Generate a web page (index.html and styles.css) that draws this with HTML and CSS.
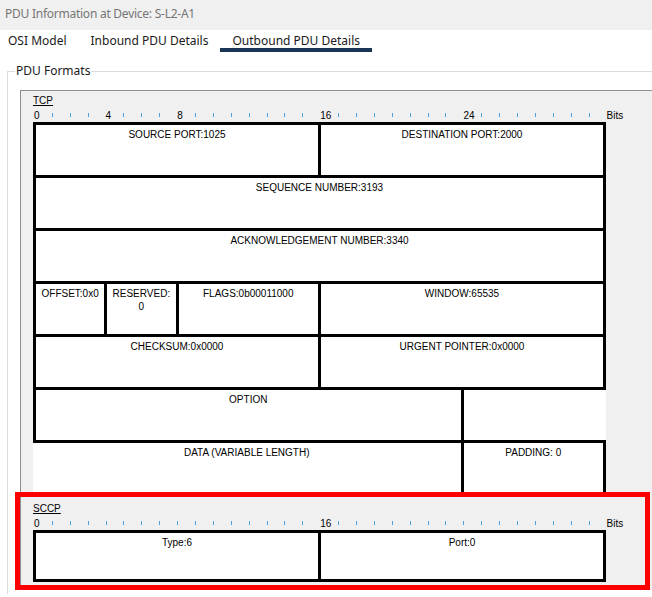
FILE: index.html
```html
<!DOCTYPE html>
<html>
<head>
<meta charset="utf-8">
<title>PDU Information</title>
<link rel="stylesheet" href="styles.css">
</head>
<body>
<div class="titlebar">PDU Information at Device: S-L2-A1</div>
<div class="tabs">
  <div class="tab first">OSI Model</div>
  <div class="tab">Inbound PDU Details</div>
  <div class="tab active">Outbound PDU Details</div>
</div>
<fieldset class="group">
  <legend>PDU Formats</legend>
  <div class="panel">
    <section class="pdu">
      <div class="pdu-name">TCP</div>
      <div class="ruler">
        <div class="bit"><span class="num">0</span></div>
        <div class="bit"><i class="tick"></i></div>
        <div class="bit"><i class="tick"></i></div>
        <div class="bit"><i class="tick"></i></div>
        <div class="bit"><span class="num">4</span></div>
        <div class="bit"><i class="tick"></i></div>
        <div class="bit"><i class="tick"></i></div>
        <div class="bit"><i class="tick"></i></div>
        <div class="bit"><span class="num">8</span></div>
        <div class="bit"><i class="tick"></i></div>
        <div class="bit"><i class="tick"></i></div>
        <div class="bit"><i class="tick"></i></div>
        <div class="bit"><i class="tick"></i></div>
        <div class="bit"><i class="tick"></i></div>
        <div class="bit"><i class="tick"></i></div>
        <div class="bit"><i class="tick"></i></div>
        <div class="bit"><span class="num">16</span></div>
        <div class="bit"><i class="tick"></i></div>
        <div class="bit"><i class="tick"></i></div>
        <div class="bit"><i class="tick"></i></div>
        <div class="bit"><i class="tick"></i></div>
        <div class="bit"><i class="tick"></i></div>
        <div class="bit"><i class="tick"></i></div>
        <div class="bit"><i class="tick"></i></div>
        <div class="bit"><span class="num">24</span></div>
        <div class="bit"><i class="tick"></i></div>
        <div class="bit"><i class="tick"></i></div>
        <div class="bit"><i class="tick"></i></div>
        <div class="bit"><i class="tick"></i></div>
        <div class="bit"><i class="tick"></i></div>
        <div class="bit"><i class="tick"></i></div>
        <div class="bit"><i class="tick"></i></div>
        <span class="bits">Bits</span>
      </div>
      <div class="fields tcp-fields">
        <div class="cell s4">SOURCE PORT:1025</div>
        <div class="cell s4">DESTINATION PORT:2000</div>
        <div class="cell s8">SEQUENCE NUMBER:3193</div>
        <div class="cell s8">ACKNOWLEDGEMENT NUMBER:3340</div>
        <div class="cell s1">OFFSET:0x0</div>
        <div class="cell s1">RESERVED:<br>0</div>
        <div class="cell s2">FLAGS:0b00011000</div>
        <div class="cell s4">WINDOW:65535</div>
        <div class="cell s4">CHECKSUM:0x0000</div>
        <div class="cell s4">URGENT POINTER:0x0000</div>
        <div class="cell s6">OPTION</div>
        <div class="cell s2 open-right"></div>
        <div class="cell s6 open-left">DATA (VARIABLE LENGTH)</div>
        <div class="cell s2">PADDING: 0</div>
      </div>
    </section>
    <section class="pdu sccp">
      <div class="pdu-name">SCCP</div>
      <div class="ruler">
        <div class="bit"><span class="num">0</span></div>
        <div class="bit"><i class="tick"></i></div>
        <div class="bit"><i class="tick"></i></div>
        <div class="bit"><i class="tick"></i></div>
        <div class="bit"><i class="tick"></i></div>
        <div class="bit"><i class="tick"></i></div>
        <div class="bit"><i class="tick"></i></div>
        <div class="bit"><i class="tick"></i></div>
        <div class="bit"><i class="tick"></i></div>
        <div class="bit"><i class="tick"></i></div>
        <div class="bit"><i class="tick"></i></div>
        <div class="bit"><i class="tick"></i></div>
        <div class="bit"><i class="tick"></i></div>
        <div class="bit"><i class="tick"></i></div>
        <div class="bit"><i class="tick"></i></div>
        <div class="bit"><i class="tick"></i></div>
        <div class="bit"><span class="num">16</span></div>
        <div class="bit"><i class="tick"></i></div>
        <div class="bit"><i class="tick"></i></div>
        <div class="bit"><i class="tick"></i></div>
        <div class="bit"><i class="tick"></i></div>
        <div class="bit"><i class="tick"></i></div>
        <div class="bit"><i class="tick"></i></div>
        <div class="bit"><i class="tick"></i></div>
        <div class="bit"><i class="tick"></i></div>
        <div class="bit"><i class="tick"></i></div>
        <div class="bit"><i class="tick"></i></div>
        <div class="bit"><i class="tick"></i></div>
        <div class="bit"><i class="tick"></i></div>
        <div class="bit"><i class="tick"></i></div>
        <div class="bit"><i class="tick"></i></div>
        <div class="bit"><i class="tick"></i></div>
        <span class="bits">Bits</span>
      </div>
      <div class="fields sccp-fields">
        <div class="cell">Type:6</div>
        <div class="cell">Port:0</div>
      </div>
    </section>
  </div>
</fieldset>
<div class="highlight"></div>
</body>
</html>
```

FILE: styles.css
```css
* { box-sizing: border-box; }
html, body { margin: 0; padding: 0; }
body {
  width: 652px;
  height: 597px;
  overflow: hidden;
  position: relative;
  background: #ffffff;
  font-family: "Noto Sans", "Open Sans", sans-serif;
}
.titlebar {
  height: 30px;
  background: #f0f0f0;
  color: #767676;
  font-size: 12px;
  letter-spacing: -0.25px;
  line-height: 28px;
  padding-left: 5px;
  white-space: nowrap;
}
.tabs {
  display: flex;
  height: 22px;
}
.tab {
  padding: 3px 12px 0;
  font-size: 12px;
  line-height: 15px;
  color: #1a1a1a;
  border-bottom: 4px solid transparent;
  white-space: nowrap;
}
.tab.first { padding-left: 8px; }
.tab.active { border-bottom-color: #1b3556; }

.group {
  margin: 11px 0 0 7px;
  padding: 0 0 4px;
  border: 1px solid #dcdcdc;
  border-bottom: none;
  border-right: none;
  min-width: 0;
}
.group legend {
  margin-left: 7px;
  padding: 0 1px;
  font-size: 12px;
  line-height: 16px;
  color: #1a1a1a;
}
.panel {
  margin: 11px 0 0 12px;
  border-left: 1px solid #8f8f8f;
  border-top: 1px solid #8f8f8f;
  background: #f0f0f0;
  padding: 4px 0 8px 12px;
  font-family: "Liberation Sans", Arial, sans-serif;
  font-size: 10px;
  color: #000;
}
.pdu-name {
  width: fit-content;
  line-height: 12px;
  text-decoration: underline;
  margin-bottom: 3px;
}
.ruler {
  display: flex;
  height: 12px;
  line-height: 12px;
}
.bit {
  flex: none;
  width: 17.906px;
  padding-left: 1px;
  white-space: nowrap;
}
.tick {
  display: block;
  width: 1px;
  height: 4px;
  margin-top: 3px;
  background: #4aa3e0;
}
.bits { padding-left: 1px; }
.fields {
  display: grid;
  width: 573px;
  gap: 3px;
  padding: 3px;
  background: #000;
}
.tcp-fields {
  grid-template-columns: repeat(8, 1fr);
  grid-auto-rows: 50px;
  padding-bottom: 2px;
}
.sccp-fields {
  grid-template-columns: repeat(2, 1fr);
  grid-auto-rows: 46px;
}
.cell {
  background: #fff;
  text-align: center;
  line-height: 13px;
  padding: 3px 2px 0;
}
.s1 { grid-column: span 1; }
.s2 { grid-column: span 2; }
.s4 { grid-column: span 4; }
.s6 { grid-column: span 6; }
.s8 { grid-column: span 8; }
.open-left { margin-left: -3px; }
.open-right { margin-right: -3px; }
.sccp { margin-top: 8px; }

.highlight {
  position: absolute;
  left: 15px;
  top: 492px;
  width: 635px;
  height: 98px;
  border: 5px solid #ff0000;
}
```
